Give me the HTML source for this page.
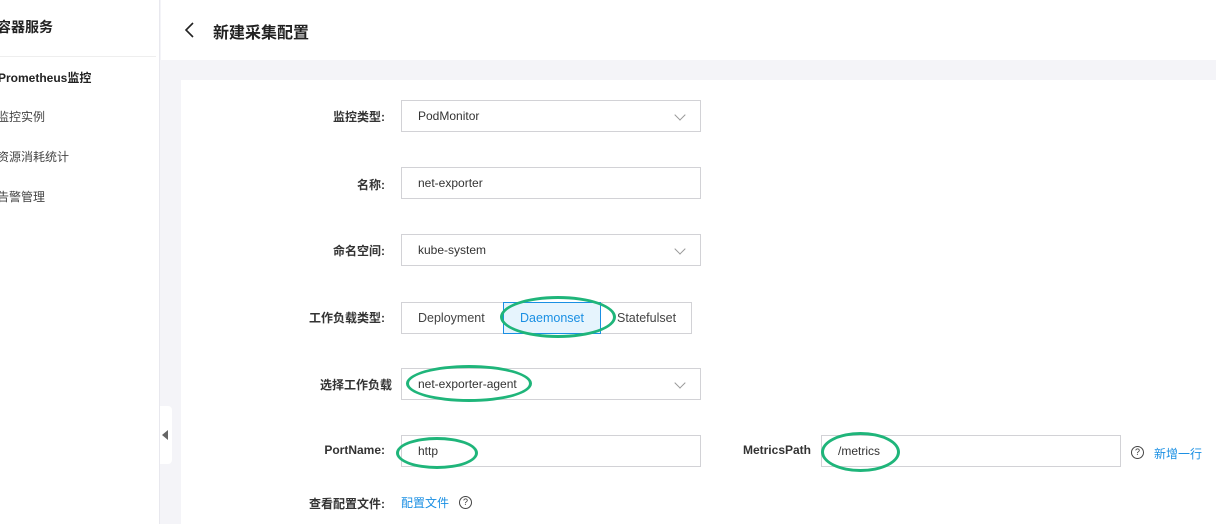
<!DOCTYPE html>
<html><head><meta charset="utf-8"><style>
*{box-sizing:border-box;margin:0;padding:0}
body{width:1216px;height:524px;overflow:hidden;background:#f4f4f8;font-family:"Liberation Sans","Noto Sans CJK SC",sans-serif;font-size:12px;color:#333;position:relative}
.abs{position:absolute}
.side{left:0;top:0;width:160px;height:524px;background:#fff;border-right:1px solid #e8e8ee}
.hdr{left:161px;top:0;width:1055px;height:60px;background:#fff}
.card{left:181px;top:80px;width:1035px;height:444px;background:#fff}
.lbl{text-align:right;width:200px;font-size:12px;color:#333;font-weight:bold}
.inp{border:1px solid #d2d2d6;height:32px;background:#fff;padding-left:16px;line-height:30px;font-size:12px;color:#333}
.chev{position:absolute;right:16px;top:10px;width:8px;height:8px;border-right:1px solid #999;border-bottom:1px solid #999;transform:rotate(45deg)}
.ell{position:absolute;border:3px solid #1fb57a;border-radius:50%}
</style></head><body>
<div class="abs side">
<div class="abs" style="left:-3px;top:17px;font-size:14px;font-weight:bold;color:#222">容器服务</div>
<div class="abs" style="left:0;top:56px;width:156px;border-top:1px solid #eee"></div>
<div class="abs" style="left:-2px;top:69px;font-size:12px;font-weight:bold;color:#222">Prometheus监控</div>
<div class="abs" style="left:-3px;top:108px;color:#444">监控实例</div>
<div class="abs" style="left:-3px;top:148px;color:#444">资源消耗统计</div>
<div class="abs" style="left:-3px;top:188px;color:#444">告警管理</div>
</div>
<div class="abs" style="left:160px;top:406px;width:12px;height:58px;background:#fff;border-radius:0 4px 4px 0"></div>
<div class="abs" style="left:162px;top:430px;width:0;height:0;border-top:5px solid transparent;border-bottom:5px solid transparent;border-right:6px solid #666"></div>
<div class="abs hdr">
<svg class="abs" style="left:22px;top:21px" width="12" height="18"><path d="M10 2 L3 9 L10 16" stroke="#222" stroke-width="1.6" fill="none"/></svg>
<div class="abs" style="left:52px;top:19px;font-size:16px;font-weight:bold;color:#222">新建采集配置</div>
</div>
<div class="abs card"></div>

<div class="abs lbl" style="left:185px;top:108px">监控类型:</div>
<div class="abs inp" style="left:401px;top:100px;width:300px">PodMonitor<span class="chev"></span></div>
<div class="abs lbl" style="left:185px;top:176px">名称:</div>
<div class="abs inp" style="left:401px;top:167px;width:300px">net-exporter</div>
<div class="abs lbl" style="left:185px;top:242px">命名空间:</div>
<div class="abs inp" style="left:401px;top:234px;width:300px">kube-system<span class="chev"></span></div>
<div class="abs lbl" style="left:185px;top:309px">工作负载类型:</div>
<div class="abs inp" style="left:401px;top:302px;width:291px;padding:0"></div>
<div class="abs" style="left:418px;top:302px;line-height:32px;color:#444;font-size:12.5px">Deployment</div>
<div class="abs" style="left:503px;top:302px;width:98px;height:32px;background:#e6f4fd;border:1px solid #1a8fe3;line-height:30px;text-align:center;color:#1a8fe3;font-size:12.5px">Daemonset</div>
<div class="abs" style="left:617px;top:302px;line-height:32px;color:#444;font-size:12.5px">Statefulset</div>
<div class="abs lbl" style="left:192px;top:376px">选择工作负载</div>
<div class="abs inp" style="left:401px;top:368px;width:300px">net-exporter-agent<span class="chev"></span></div>
<div class="abs lbl" style="left:185px;top:443px">PortName:</div>
<div class="abs inp" style="left:401px;top:435px;width:300px">http</div>
<div class="abs lbl" style="left:611px;top:443px">MetricsPath</div>
<div class="abs inp" style="left:821px;top:435px;width:300px">/metrics</div>
<div class="abs" style="left:1131px;top:446px;width:13px;height:13px;border:1px solid #444;border-radius:50%;font-size:9px;line-height:11px;text-align:center">?</div>
<div class="abs" style="left:1154px;top:445px;color:#1a8fe3">新增一行</div>
<div class="abs lbl" style="left:185px;top:495px">查看配置文件:</div>
<div class="abs" style="left:401px;top:494px;color:#1a8fe3">配置文件</div>
<div class="abs" style="left:459px;top:496px;width:13px;height:13px;border:1px solid #444;border-radius:50%;font-size:9px;line-height:11px;text-align:center">?</div>

<div class="ell" style="left:500px;top:296px;width:116px;height:42px"></div>
<div class="ell" style="left:406px;top:365px;width:126px;height:37px"></div>
<div class="ell" style="left:396px;top:437px;width:82px;height:32px"></div>
<div class="ell" style="left:821px;top:432px;width:79px;height:40px"></div>
</body></html>
